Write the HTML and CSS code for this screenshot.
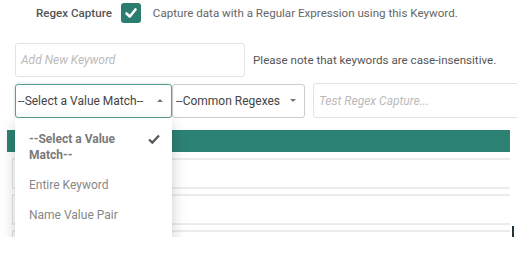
FILE: index.html
```html
<!DOCTYPE html>
<html lang="en">
<head>
    <meta charset="utf-8">
    <title>Regex Capture</title>
    <link rel="stylesheet" href="styles.css">
</head>
<body>
    <div class="page">

        <div class="capture-row">
            <span class="label">Regex Capture</span>
            <span class="checkbox">
                <svg width="14" height="14" viewBox="0 0 14 14"><polyline points="2.5,7.5 5.8,10.5 11.5,3.5" fill="none" stroke="#fff" stroke-width="2.6" stroke-linecap="round" stroke-linejoin="round"/></svg>
            </span>
            <span class="help">Capture data with a Regular Expression using this Keyword.</span>
        </div>

        <div class="keyword-row">
            <div class="input keyword"><span class="placeholder">Add New Keyword</span></div>
            <span class="note">Please note that keywords are case-insensitive.</span>
        </div>

        <div class="match-row">
            <div class="select open">
                <span>--Select a Value Match--</span>
                <i class="caret up"></i>
                <ul class="menu">
                    <li class="picked">--Select a Value Match--
                        <svg class="tick" width="12" height="12" viewBox="0 0 12 12"><path d="M1 6.5 L4.3 9.6 L11 2.4" fill="none" stroke="#555" stroke-width="2.2"/></svg>
                    </li>
                    <li>Entire Keyword</li>
                    <li>Name Value Pair</li>
                </ul>
            </div>
            <div class="select common">
                <span>--Common Regexes</span>
                <i class="caret"></i>
            </div>
            <div class="input test"><span class="placeholder">Test Regex Capture...</span></div>
        </div>

        <div class="table">
            <div class="head"></div>
            <div class="row"></div>
            <div class="row"></div>
            <div class="row"><i class="mark"></i></div>
        </div>

    </div>
</body>
</html>
```

FILE: styles.css
```css
body {
    margin: 0;
    background-color: white;
    font-family: Roboto, "Liberation Sans", sans-serif;
    overflow: hidden;
}

.page {
    height: 237px;
    overflow: hidden;
    padding: 0 0 0 15px;
}

.capture-row {
    display: flex;
    align-items: center;
    height: 20px;
    padding-top: 3px;
    font-size: 11.6px;
    color: #666;
}

.label {
    margin-left: 21px;
    font-weight: 500;
    color: #555;
}

.checkbox {
    display: flex;
    align-items: center;
    justify-content: center;
    width: 20px;
    height: 20px;
    margin: 0 12px 0 9px;
    border-radius: 3px;
    background-color: #2b7d70;
}

.keyword-row {
    display: flex;
    align-items: center;
    margin-top: 20px;
    font-size: 11.6px;
    color: #555;
}

.input {
    box-sizing: border-box;
    display: flex;
    align-items: center;
    height: 34px;
    border: 1px solid #e2e2e2;
    border-radius: 3px;
    padding-left: 5px;
    background: white;
}

.keyword {
    width: 230px;
}

.placeholder {
    font-size: 12px;
    font-style: italic;
    color: #bbb;
}

.note {
    margin-left: 8px;
}

.match-row {
    display: flex;
    align-items: center;
    margin-top: 6px;
    width: 520px;
}

.select {
    box-sizing: border-box;
    position: relative;
    display: flex;
    align-items: center;
    justify-content: space-between;
    height: 34px;
    padding: 0 8px 0 2px;
    border: 1px solid #ccc;
    border-radius: 3px;
    font-size: 12px;
    color: #444;
}

.open {
    width: 157px;
    border-color: #5a9e92;
    box-shadow: 0 0 3px rgba(60, 140, 125, 0.3);
}

.common {
    width: 133px;
    margin-right: 8px;
    padding-left: 3px;
}

.caret {
    width: 0;
    height: 0;
    border-left: 3px solid transparent;
    border-right: 3px solid transparent;
    border-top: 3px solid #777;
}

.caret.up {
    border-top: none;
    border-bottom: 3px solid #777;
}

.test {
    width: 212px;
    height: 35px;
}

.menu {
    position: absolute;
    top: 33px;
    left: -1px;
    z-index: 5;
    width: 157px;
    height: 130px;
    margin: 0;
    padding: 9px 0 0 0;
    list-style: none;
    background: white;
    box-shadow: 0 6px 14px rgba(0, 0, 0, 0.2);
    box-sizing: border-box;
    font-size: 12px;
    color: #888;
}

.menu li {
    position: relative;
    padding: 4px 30px 7px 14px;
    line-height: 16px;
}

.menu li + li {
    padding-top: 7px;
    padding-bottom: 7px;
}

.picked {
    font-weight: 700;
    color: #7a7a7a;
}

.tick {
    position: absolute;
    right: 12px;
    top: 6px;
}

.table {
    position: relative;
    margin: 12px 0 0 -8px;
    width: 503px;
}

.head {
    height: 22px;
    background-color: #2c8273;
}

.row {
    position: relative;
    height: 27px;
    margin: 5px 0 0 5px;
    border-top: 2px solid #ececec;
    border-bottom: 2px solid #ececec;
    border-left: 1px solid #e4e4e4;
}

.head + .row {
    margin-top: 6px;
}

.mark {
    position: absolute;
    right: -4px;
    top: -6px;
    width: 2px;
    height: 14px;
    background: #23343a;
}
```
